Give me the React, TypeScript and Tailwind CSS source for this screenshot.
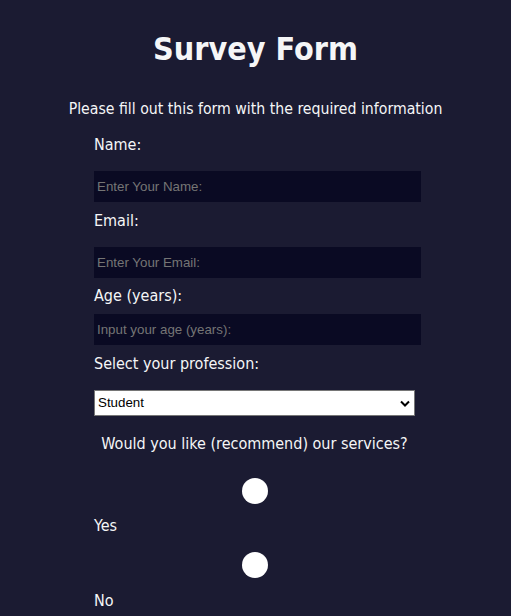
import { useState } from "react";

const font = { fontFamily: '"DejaVu Sans Condensed", "DejaVu Sans", sans-serif' };

const Field = ({ label, placeholder, type, gapTop, gapBottom }: { label: string; placeholder: string; type: string; gapTop: string; gapBottom: string }) => {
  return (
    <div className={gapTop}>
      <label className="block text-[16px] leading-[24px]">{label}</label>
      <input
        type={type}
        placeholder={placeholder}
        className={`${gapBottom} block h-[31px] w-[327px] bg-[#0a0a23] px-[3px] text-[13.33px] text-white placeholder:text-[#757575] outline-none font-['Liberation_Sans',Arial,sans-serif]`}
      />
    </div>
  );
};

export default function App() {
  const [answer, setAnswer] = useState("");

  return (
    <div className="min-h-screen w-full bg-[#1b1b32] text-[#f5f6f7]" style={font}>
      <h1 className="pt-[29px] text-center text-[32px] font-bold leading-[40px]">Survey Form</h1>
      <p className="mt-[28px] text-center text-[15.7px] leading-[24px]">
        Please fill out this form with the required information
      </p>
      <form className="ml-[94px] mt-[12px] pb-[10px]">
        <Field label="Name:" placeholder="Enter Your Name:" type="text" gapTop="mt-[1px]" gapBottom="mt-[14px]" />
        <Field label="Email:" placeholder="Enter Your Email:" type="email" gapTop="mt-[7px]" gapBottom="mt-[14px]" />
        <Field label="Age (years):" placeholder="Input your age (years):" type="number" gapTop="mt-[6px]" gapBottom="mt-[6px]" />

        <label className="mt-[7px] block text-[16px] leading-[24px]">Select your profession:</label>
        <div className="relative mt-[14px] w-[321px]">
          <select className="block h-[26px] w-full appearance-none border border-[#767676] bg-white pl-[3px] text-[13.33px] text-black outline-none font-['Liberation_Sans',Arial,sans-serif]">
            <option>Student</option>
            <option>Full Time Job</option>
            <option>Part Time Job</option>
            <option>Other</option>
          </select>
          <svg className="pointer-events-none absolute right-[5px] top-[10px]" width="10" height="7" viewBox="0 0 10 7">
            <path d="M1 1.5 L5 5.5 L9 1.5" fill="none" stroke="#000" strokeWidth="2" />
          </svg>
        </div>

        <div className="mt-[16px] w-[321px]">
          <p className="text-center text-[16px] leading-[24px]">Would you like (recommend) our services?</p>
          <div className="mt-[22px] flex justify-center">
            <input
              type="radio"
              name="recommend"
              checked={answer === "yes"}
              onChange={() => setAnswer("yes")}
              className="h-[26px] w-[26px] appearance-none rounded-full bg-white"
            />
          </div>
          <label className="mt-[10px] block text-[16px] leading-[24px]">Yes</label>
          <div className="mt-[14px] flex justify-center">
            <input
              type="radio"
              name="recommend"
              checked={answer === "no"}
              onChange={() => setAnswer("no")}
              className="h-[26px] w-[26px] appearance-none rounded-full bg-white"
            />
          </div>
          <label className="mt-[11px] block text-[16px] leading-[24px]">No</label>
        </div>
      </form>
    </div>
  );
}
